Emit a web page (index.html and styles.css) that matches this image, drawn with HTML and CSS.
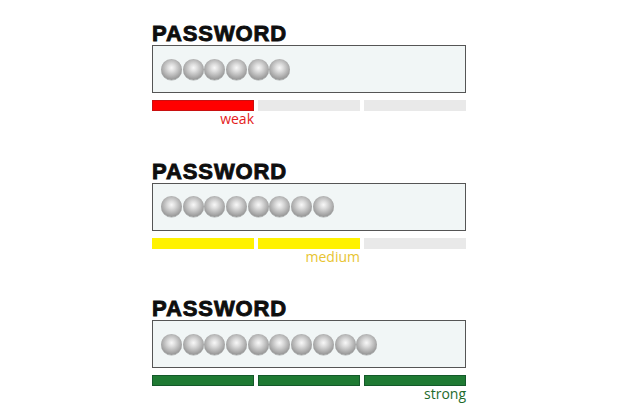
FILE: index.html
```html
<!DOCTYPE html>
<html lang="en">
<head>
<meta charset="utf-8">
<title>Password strength</title>
<link rel="stylesheet" href="styles.css">
</head>
<body>
<main class="stack">
  <section class="field">
    <h2 class="field-title">PASSWORD</h2>
    <div class="input">
      <span class="dot"></span><span class="dot"></span><span class="dot"></span><span class="dot"></span><span class="dot"></span><span class="dot"></span>
    </div>
    <div class="meter weak">
      <span class="bar on"></span><span class="bar"></span><span class="bar"></span>
      <span class="label">weak</span>
    </div>
  </section>

  <section class="field">
    <h2 class="field-title">PASSWORD</h2>
    <div class="input">
      <span class="dot"></span><span class="dot"></span><span class="dot"></span><span class="dot"></span><span class="dot"></span><span class="dot"></span><span class="dot"></span><span class="dot"></span>
    </div>
    <div class="meter medium">
      <span class="bar on"></span><span class="bar on"></span><span class="bar"></span>
      <span class="label">medium</span>
    </div>
  </section>

  <section class="field">
    <h2 class="field-title">PASSWORD</h2>
    <div class="input">
      <span class="dot"></span><span class="dot"></span><span class="dot"></span><span class="dot"></span><span class="dot"></span><span class="dot"></span><span class="dot"></span><span class="dot"></span><span class="dot"></span><span class="dot"></span>
    </div>
    <div class="meter strong">
      <span class="bar on"></span><span class="bar on"></span><span class="bar on"></span>
      <span class="label">strong</span>
    </div>
  </section>
</main>
</body>
</html>
```
FILE: styles.css
```css
html, body {
  margin: 0;
  background: #ffffff;
}

.stack {
  display: flex;
  flex-direction: column;
  padding: 23px 0 0 152px;
  width: 314px;
}

.field {
  height: 137.5px;
  display: flex;
  flex-direction: column;
}

.field-title {
  margin: 0;
  font-family: "Liberation Sans", Arial, sans-serif;
  font-weight: 700;
  font-size: 22px;
  line-height: 22px;
  letter-spacing: 0.9px;
  color: #0e0e0e;
  -webkit-text-stroke: 0.9px #0e0e0e;
}

.input {
  box-sizing: border-box;
  height: 48px;
  border: 1px solid #555555;
  background: #f1f6f6;
  display: flex;
  align-items: center;
  gap: 0.7px;
  padding-left: 8px;
}

/* shaded grey bead used as a masked character */
.dot {
  width: 21px;
  height: 21px;
  border-radius: 50%;
  background: radial-gradient(circle at 50% 42%, #f8f8f8 0%, #dedede 22%, #b0b0b0 55%, #8a8a8a 82%, #6f6f6f 100%);
  box-shadow: 0 0.5px 0.6px rgba(0, 0, 0, 0.3);
}

.meter {
  display: grid;
  grid-template-columns: repeat(3, 1fr);
  column-gap: 4px;
  margin-top: 7px;
}

.bar {
  box-sizing: border-box;
  height: 11px;
  background: #e9e9e9;
}

.label {
  grid-row: 2;
  margin-top: 1px;
  text-align: right;
  font-family: "Open Sans", sans-serif;
  font-size: 14px;
  line-height: 14px;
}

.weak .bar.on { background: #ff0000; border: 1px solid #c91010; }
.weak .label { grid-column: 1; color: #e41b1b; }

.medium .bar.on { background: #fff200; }
.medium .label { grid-column: 2; color: #e8c431; }

.strong .bar.on { background: #1f7a33; border: 1px solid #14592a; }
.strong .label { grid-column: 3; color: #1e6b2c; }
```
